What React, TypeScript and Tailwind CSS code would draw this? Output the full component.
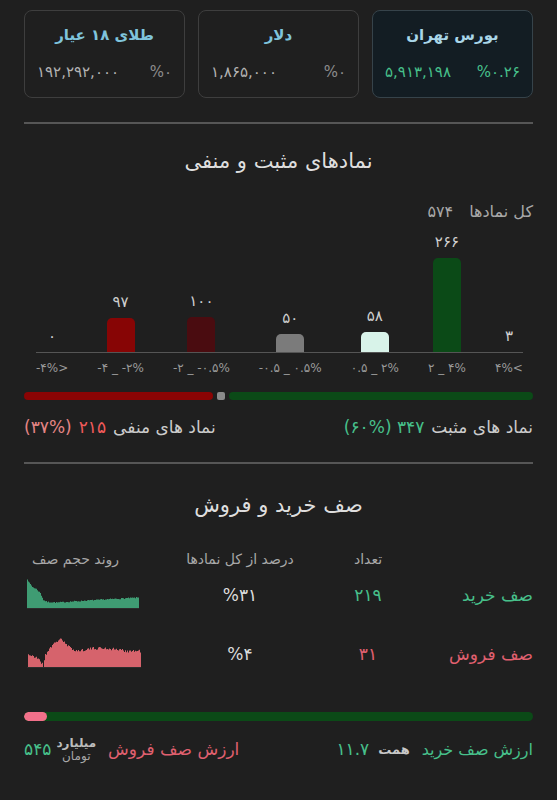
import React from 'react';

type Pt = [number, number];

const cards = [
  { title: 'بورس تهران', value: '۵,۹۱۳,۱۹۸', pct: '%۰.۲۶', active: true },
  { title: 'دلار', value: '۱,۸۶۵,۰۰۰', pct: '%۰', active: false },
  { title: 'طلای ۱۸ عیار', value: '۱۹۲,۲۹۲,۰۰۰', pct: '%۰', active: false },
];

// left to right, as drawn
const bars = [
  { value: '۰', count: 0, color: 'bg-[#8a0404]', label: '-۴%>' },
  { value: '۹۷', count: 97, color: 'bg-[#870505]', label: '-۴ _ -۲%' },
  { value: '۱۰۰', count: 100, color: 'bg-[#4a0c10]', label: '-۲ _ -۰.۵%' },
  { value: '۵۰', count: 50, color: 'bg-[#7b7b7b]', label: '-۰.۵ _ ۰.۵%' },
  { value: '۵۸', count: 58, color: 'bg-[#d8f3e9]', label: '۰.۵ _ ۲%' },
  { value: '۲۶۶', count: 266, color: 'bg-[#0b4a17]', label: '۲ _ ۴%' },
  { value: '۳', count: 3, color: 'bg-[#0b4a17]', label: '۴%<' },
];

function rng(seed: number) {
  let a = seed;
  return () => {
    a |= 0;
    a = (a + 0x6d2b79f5) | 0;
    let t = Math.imul(a ^ (a >>> 15), 1 | a);
    t = (t + Math.imul(t ^ (t >>> 7), 61 | t)) ^ t;
    return ((t ^ (t >>> 14)) >>> 0) / 4294967296;
  };
}

function lerp(pts: Pt[], x: number) {
  for (let i = 0; i < pts.length - 1; i++) {
    const [x0, y0] = pts[i];
    const [x1, y1] = pts[i + 1];
    if (x >= x0 && x <= x1) return y0 + ((y1 - y0) * (x - x0)) / (x1 - x0);
  }
  return pts[pts.length - 1][1];
}

function areaPath(pts: Pt[], w: number, h: number, seed: number, jitter: number) {
  const r = rng(seed);
  let d = `M0,${h}`;
  for (let x = 0; x < w; x++) {
    const v = Math.max(0, Math.min(h, lerp(pts, x) + (r() - 0.5) * jitter));
    const y = (h - v).toFixed(1);
    d += ` L${x},${y} L${x + 1},${y}`;
  }
  return d + ` L${w},${h} Z`;
}

const buyPath = areaPath(
  [[0, 30], [2, 26], [5, 22], [9, 20], [13, 16], [16, 9], [20, 7], [30, 6.5], [60, 8.5], [112, 11.5]],
  112, 30, 7, 1.2,
);
const sellPath = areaPath(
  [[0, 0], [1, 14], [6, 11], [11, 10], [15, 4], [16, 2], [18, 13], [23, 21], [28, 25], [33, 30], [38, 24], [43, 20], [50, 17], [60, 19], [73, 20], [86, 19], [100, 17], [114, 17]],
  114, 30, 21, 3,
);

const Spark = ({ path, w, fill }: { path: string; w: number; fill: string }) => (
  <svg width={w} height={30} viewBox={`0 0 ${w} 30`} className="block">
    <path d={path} fill={fill} />
    <line x1={0} y1={29.5} x2={w} y2={29.5} stroke="#2c2c2c" strokeWidth={1} />
  </svg>
);

export default function App() {
  return (
    <div
      dir="rtl"
      className="min-h-[800px] bg-[#1f1f1f] px-6 pt-[10px] font-['DejaVu_Sans',sans-serif] text-[#dcdcdc]"
    >
      {/* Cards */}
      <div className="grid grid-cols-3 gap-[13px]">
        {cards.map((c) => (
          <div
            key={c.title}
            className={
              'h-[88px] rounded-lg border px-3 pt-[14px] ' +
              (c.active ? 'border-[#36434a] bg-[#131d23]' : 'border-[#3e3e3e] bg-[#1f1f1f]')
            }
          >
            <div
              className={
                'text-center text-[15px] font-bold leading-5 ' +
                (c.active ? 'text-[#a9d6e8]' : 'text-[#7fc4dc]')
              }
            >
              {c.title}
            </div>
            <div className="mt-[17px] flex items-center justify-between text-[15px] leading-5">
              <span className={c.active ? 'text-[#47c08b]' : 'text-[#8c8c8c]'}>{c.pct}</span>
              <span className={c.active ? 'text-[#47c08b]' : 'text-[#b3b3b3]'}>{c.value}</span>
            </div>
          </div>
        ))}
      </div>

      <div className="mt-6 h-[2px] bg-[#565656]" />

      {/* Positive / negative */}
      <h2 className="mt-[22px] text-center text-[21px] leading-[30px] text-[#dedede]">نمادهای مثبت و منفی</h2>
      <div className="mt-[26px] flex gap-4 text-[16px] leading-5 text-[#a8a8a8]">
        <span>کل نمادها</span>
        <span>۵۷۴</span>
      </div>

      <div dir="ltr" className="ml-3 mr-[10px] mt-3 grid grid-cols-[repeat(7,auto)] items-end justify-between">
        {bars.map((b) => {
          const h = Math.round(b.count * 0.353);
          return (
            <div key={b.label} className="flex flex-col items-center">
              <span className="mb-2 text-[15px] leading-4 text-[#cfcfcf]">{b.value}</span>
              <div className={'w-7 rounded-t-[5px] ' + b.color} style={{ height: h < 2 ? 0 : h }} />
            </div>
          );
        })}
        <div className="col-span-7 h-px bg-[#555]" />
        {bars.map((b) => (
          <span
            key={'l' + b.label}
            className="mt-[7px] whitespace-nowrap text-center text-[12px] leading-4 text-[#9a9a9a]"
          >
            <bdo dir="ltr">{b.label}</bdo>
          </span>
        ))}
      </div>

      <div className="mt-4 flex h-2 items-center gap-1">
        <div className="h-2 flex-[347] rounded-full bg-[#0b4a17]" />
        <div className="h-2 w-2 rounded-[2px] bg-[#8a8a8a]" />
        <div className="h-2 flex-[215] rounded-full bg-[#8a0404]" />
      </div>

      <div className="mt-[16px] flex justify-between text-[17px] leading-[22px]">
        <div className="flex gap-[7px]">
          <span className="text-[#cccccc]">نماد های مثبت</span>
          <span className="text-[#47c08b]">۳۴۷ (۶۰%)</span>
        </div>
        <div className="flex gap-[7px]">
          <span className="text-[#cccccc]">نماد های منفی</span>
          <span className="text-[#f05a5a]">۲۱۵</span>
          <span className="text-[#e58585]">(۳۷%)</span>
        </div>
      </div>

      <div className="mt-[24px] h-[2px] bg-[#565656]" />

      {/* Queues */}
      <h2 className="mt-[26px] text-center text-[21px] leading-[30px] text-[#dedede]">صف خرید و فروش</h2>

      <div className="mt-[30px] grid grid-cols-[113px_104px_152px_1fr] items-center text-[14px] leading-[18px] text-[#a8a8a8]">
        <span />
        <span className="text-center">تعداد</span>
        <span className="text-center">درصد از کل نمادها</span>
        <span className="ml-[8px] justify-self-end">روند حجم صف</span>
      </div>

      <div className="mt-[11px] grid grid-cols-[113px_104px_152px_1fr] items-center text-[17px]">
        <span className="pt-1 text-[#47c08b]">صف خرید</span>
        <span className="pt-1 text-center text-[#47c08b]">۲۱۹</span>
        <span className="pt-1 text-center text-[#dcdcdc]">%۳۱</span>
        <div className="ml-[3px] justify-self-end">
          <Spark path={buyPath} w={112} fill="#3f9c73" />
        </div>
      </div>

      <div className="mt-[29px] grid grid-cols-[113px_104px_152px_1fr] items-center text-[17px]">
        <span className="pt-1 text-[#e0606f]">صف فروش</span>
        <span className="pt-1 text-center text-[#e0606f]">۳۱</span>
        <span className="pt-1 text-center text-[#dcdcdc]">%۴</span>
        <div className="ml-[3px] justify-self-end">
          <Spark path={sellPath} w={114} fill="#d6636c" />
        </div>
      </div>

      <div className="mt-[44px] flex h-[9px] overflow-hidden rounded-full bg-[#0b4a17]">
        <div className="flex-1" />
        <div className="w-[23px] rounded-full bg-[#f2708a]" />
      </div>

      <div className="mt-[16px] flex items-center justify-between">
        <div className="flex items-center gap-[9px]">
          <span className="ml-[3px] text-[16px] text-[#47c08b]">ارزش صف خرید</span>
          <span className="text-[13px] font-bold text-[#c8c8c8]">همت</span>
          <span className="text-[17px] text-[#47c08b]">۱۱.۷</span>
        </div>
        <div className="flex items-center gap-[5px]">
          <span className="ml-[7px] text-[17px] text-[#e0606f]">ارزش صف فروش</span>
          <div className="flex flex-col items-center text-[12px] leading-[13px]">
            <span className="font-bold text-[#bdbdbd]">میلیارد</span>
            <span className="text-[#a8a8a8]">تومان</span>
          </div>
          <span className="text-[17px] text-[#47c08b]">۵۴۵</span>
        </div>
      </div>
    </div>
  );
}
